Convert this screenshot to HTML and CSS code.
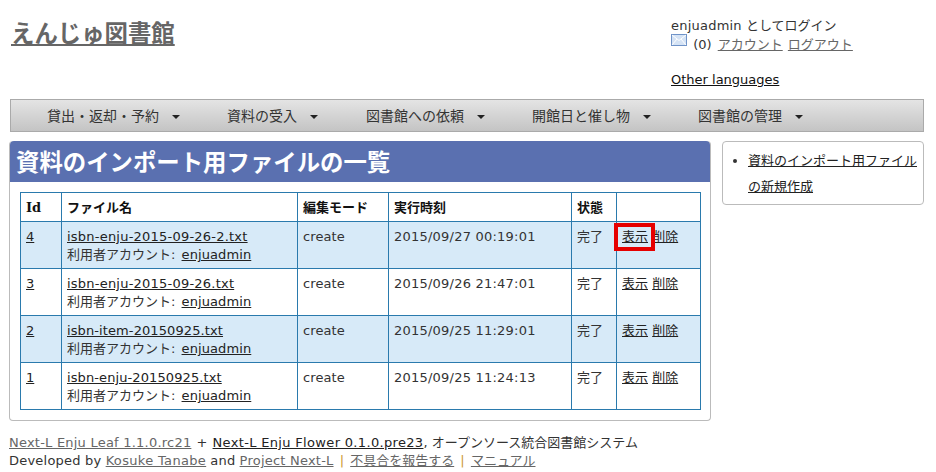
FILE: index.html
```html
<!DOCTYPE html>
<html lang="ja">
<head>
    <meta charset="UTF-8">
    <title>えんじゅ図書館</title>
    <link rel="stylesheet" href="styles.css">
</head>
<body>
    <div id="header">
        <h1 id="site-title"><a href="#">えんじゅ図書館</a></h1>
        <div id="user-info">
            <div><span class="lat">enjuadmin</span> としてログイン</div>
            <div class="user-links">
                <svg class="mail-icon" width="16" height="12" viewBox="0 0 16 12"><rect x="0.5" y="0.5" width="15" height="11" fill="#d5e3f5" stroke="#6f93c8"/><path d="M1 1l7 5.5 7-5.5M1 11l5-6M15 11l-5-6" fill="none" stroke="#fff"/></svg>
                <span class="count">(0)</span> <a class="soft" href="#">アカウント</a> <a class="soft" href="#">ログアウト</a>
            </div>
            <div class="languages"><a href="#">Other languages</a></div>
        </div>
    </div>

    <ul id="menu">
        <li>貸出・返却・予約<span class="caret"></span></li>
        <li>資料の受入<span class="caret"></span></li>
        <li>図書館への依頼<span class="caret"></span></li>
        <li>開館日と催し物<span class="caret"></span></li>
        <li>図書館の管理<span class="caret"></span></li>
    </ul>

    <div id="content">
        <div id="main">
            <h2 id="page-title">資料のインポート用ファイルの一覧</h2>
            <div id="table-wrap">
                <table>
                    <colgroup>
                        <col class="col-id"><col class="col-file"><col class="col-mode"><col class="col-time"><col class="col-state"><col class="col-actions">
                    </colgroup>
                    <tr>
                        <th class="id-head">Id</th><th>ファイル名</th><th>編集モード</th><th>実行時刻</th><th>状態</th><th></th>
                    </tr>
                    <tr class="odd">
                        <td><a href="#">4</a></td>
                        <td><a class="lat" href="#">isbn-enju-2015-09-26-2.txt</a><br>利用者アカウント<span class="colon">:</span> <a class="tight" href="#">enjuadmin</a></td>
                        <td class="tight">create</td><td class="lat">2015/09/27 00:19:01</td><td>完了</td>
                        <td><span class="marked"><a href="#">表示</a></span> <a href="#">削除</a></td>
                    </tr>
                    <tr>
                        <td><a href="#">3</a></td>
                        <td><a class="lat" href="#">isbn-enju-2015-09-26.txt</a><br>利用者アカウント<span class="colon">:</span> <a class="tight" href="#">enjuadmin</a></td>
                        <td class="tight">create</td><td class="lat">2015/09/26 21:47:01</td><td>完了</td>
                        <td><a href="#">表示</a> <a href="#">削除</a></td>
                    </tr>
                    <tr class="odd">
                        <td><a href="#">2</a></td>
                        <td><a class="tight" href="#">isbn-item-20150925.txt</a><br>利用者アカウント<span class="colon">:</span> <a class="tight" href="#">enjuadmin</a></td>
                        <td class="tight">create</td><td class="lat">2015/09/25 11:29:01</td><td>完了</td>
                        <td><a href="#">表示</a> <a href="#">削除</a></td>
                    </tr>
                    <tr>
                        <td><a href="#">1</a></td>
                        <td><a class="tight" href="#">isbn-enju-20150925.txt</a><br>利用者アカウント<span class="colon">:</span> <a class="tight" href="#">enjuadmin</a></td>
                        <td class="tight">create</td><td class="lat">2015/09/25 11:24:13</td><td>完了</td>
                        <td><a href="#">表示</a> <a href="#">削除</a></td>
                    </tr>
                </table>
            </div>
        </div>
        <div id="side">
            <ul>
                <li><a href="#">資料のインポート用ファイルの新規作成</a></li>
            </ul>
        </div>
    </div>

    <div id="footer">
        <a class="soft lat" href="#">Next-L Enju Leaf 1.1.0.rc21</a> <span class="plus">+</span> <a class="wide" href="#">Next-L Enju Flower 0.1.0.pre23</a>, オープンソース統合図書館システム<br>
        <span class="lat">Developed by</span> <a class="soft wide" href="#">Kosuke Tanabe</a> <span class="lat">and</span> <a class="soft lat" href="#">Project Next-L</a> <span class="sep">|</span> <a class="soft" href="#">不具合を報告する</a> <span class="sep">|</span> <a class="soft" href="#">マニュアル</a>
    </div>
</body>
</html>
```

FILE: styles.css
```css
body {
    font-family: "DejaVu Sans", "Noto Sans CJK JP", sans-serif;
    font-size: 13px;
    line-height: 18px;
    color: #333;
    margin: 0;
    padding: 0 12px 0 9px;
    background-color: #fff;
}

a {
    color: #222;
}

a.soft {
    color: #666;
}

/* latin runs are a little wider in the original font */
.lat {
    letter-spacing: 0.22px;
}

.tight {
    letter-spacing: 0.1px;
}

.wide {
    letter-spacing: 0.33px;
}

.colon {
    margin-right: 2px;
}

.plus {
    margin: 0 1px;
}

#header {
    display: flex;
    justify-content: space-between;
    height: 99px;
}

#site-title {
    margin: 17px 0 0 2px;
    font-size: 23.4px;
    line-height: 34px;
    font-weight: bold;
}

#site-title a {
    color: #666;
}

#user-info {
    width: 253px;
    padding-top: 17px;
}

.user-links {
    height: 20px;
    line-height: 20px;
    word-spacing: 1px;
}

.count {
    margin-left: -1px;
    margin-right: 1px;
}

.mail-icon {
    vertical-align: 3px;
    margin-top: -4px;
    margin-right: 2px;
}

.languages {
    margin-top: 16px;
}

.languages a {
    color: #111;
}

#menu {
    display: flex;
    list-style: none;
    margin: 0 0 0 1px;
    padding: 0 0 0 36px;
    height: 31px;
    line-height: 32px;
    font-size: 14px;
    border: 1px solid #aaa;
    background: linear-gradient(#e4e4e4, #c4c4c4);
}

#menu li {
    margin-right: 47px;
}

#menu li:nth-child(2) {
    margin-right: 48px;
}

.caret {
    display: inline-block;
    margin-left: 13px;
    vertical-align: 2px;
    border-top: 4px solid #222;
    border-left: 4px solid transparent;
    border-right: 4px solid transparent;
}

#content {
    display: flex;
    gap: 11px;
    margin-top: 9px;
}

#main {
    width: 700px;
    height: 279px;
    border: 1px solid #bbb;
    border-top: 0;
    border-radius: 4px;
}

#page-title {
    margin: 0;
    padding: 0 6px;
    height: 41px;
    line-height: 44px;
    font-size: 23.4px;
    font-weight: bold;
    color: #fff;
    background-color: #5a70b0;
    border-radius: 4px 4px 0 0;
}

#table-wrap {
    padding: 10px;
}

table {
    border-collapse: collapse;
    table-layout: fixed;
    width: 680px;
}

.col-id { width: 41px; }
.col-file { width: 236px; }
.col-mode { width: 91px; }
.col-time { width: 183px; }
.col-state { width: 45px; }
.col-actions { width: 84px; }

th, td {
    border: 1px solid #2a7aad;
    padding: 6px 5px 4px;
    text-align: left;
    vertical-align: top;
    white-space: nowrap;
}

th {
    height: 18px;
    color: #111;
}

.id-head {
    font-family: "DejaVu Serif", serif;
}

td {
    height: 36px;
}

.odd td {
    background-color: #d7eaf8;
}

.marked {
    position: relative;
}

.marked::after {
    content: "";
    position: absolute;
    left: -8px;
    right: -7px;
    top: -6px;
    bottom: -7px;
    border: 4px solid #e60000;
}

#side {
    width: 200px;
    height: 62px;
    border: 1px solid #bbb;
    border-radius: 4px;
}

#side ul {
    margin: 0;
    padding: 6px 0 0 25px;
}

#side li {
    line-height: 26px;
}

#side a {
    color: #222;
}

#footer {
    margin-top: 13px;
}

.sep {
    margin: 0 2px;
    color: #c93;
}
```
